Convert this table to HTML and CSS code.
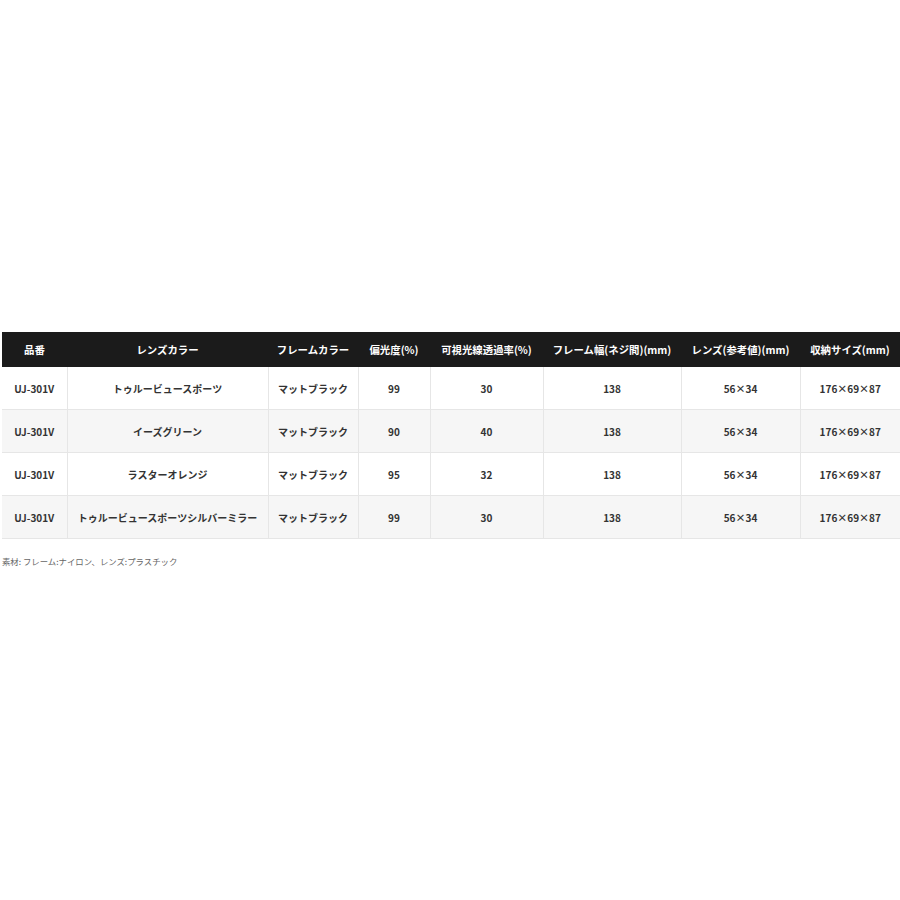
FILE: index.html
```html
<!DOCTYPE html>
<html lang="ja">
<head>
<meta charset="utf-8">
<title>UJ-301V</title>
<link rel="stylesheet" href="styles.css">
</head>
<body>
<div class="page">
  <table class="spec">
    <colgroup>
      <col class="c1"><col class="c2"><col class="c3"><col class="c4"><col class="c5"><col class="c6"><col class="c7"><col class="c8">
    </colgroup>
    <thead>
      <tr>
        <th>品番</th><th>レンズカラー</th><th>フレームカラー</th><th>偏光度(%)</th><th>可視光線透過率(%)</th><th>フレーム幅(ネジ間)(mm)</th><th>レンズ(参考値)(mm)</th><th>収納サイズ(mm)</th>
      </tr>
    </thead>
    <tbody>
      <tr><td>UJ-301V</td><td>トゥルービュースポーツ</td><td>マットブラック</td><td>99</td><td>30</td><td>138</td><td>56×34</td><td>176×69×87</td></tr>
      <tr><td>UJ-301V</td><td>イーズグリーン</td><td>マットブラック</td><td>90</td><td>40</td><td>138</td><td>56×34</td><td>176×69×87</td></tr>
      <tr><td>UJ-301V</td><td>ラスターオレンジ</td><td>マットブラック</td><td>95</td><td>32</td><td>138</td><td>56×34</td><td>176×69×87</td></tr>
      <tr><td>UJ-301V</td><td>トゥルービュースポーツシルバーミラー</td><td>マットブラック</td><td>99</td><td>30</td><td>138</td><td>56×34</td><td>176×69×87</td></tr>
    </tbody>
  </table>
  <p class="note">素材: フレーム:ナイロン、レンズ:プラスチック</p>
</div>
</body>
</html>
```

FILE: styles.css
```css
html, body {
  margin: 0;
  padding: 0;
  background: #ffffff;
}
body {
  font-family: "Noto Sans CJK JP", "Noto Sans", sans-serif;
  color: #333333;
  overflow: hidden;
}
.page {
  padding: 332px 0 0 2px;
  width: 898px;
}
.spec {
  border-collapse: collapse;
  table-layout: fixed;
  width: 898px;
  font-size: 10px;
  font-weight: 700;
}
.c1 { width: 65px; }
.c2 { width: 201px; }
.c3 { width: 90px; }
.c4 { width: 72px; }
.c5 { width: 113px; }
.c6 { width: 138px; }
.c7 { width: 119px; }
.c8 { width: 100px; }
.spec th {
  background: #1b1b1b;
  color: #ffffff;
  height: 35px;
  padding: 0;
  text-align: center;
  font-size: 10.4px;
  font-weight: 700;
  white-space: nowrap;
  border: none;
}
.spec td {
  height: 42px;
  padding: 0;
  text-align: center;
  white-space: nowrap;
  border: 1px solid #e6e6e6;
  border-top: none;
}
.spec td:first-child { border-left: none; }
.spec td:last-child { border-right: none; }
.spec tbody tr:nth-child(even) td {
  background: #f6f6f6;
}
.note {
  margin: 16px 0 0 0;
  font-size: 8.4px;
  color: #666666;
  font-weight: 400;
}
```
